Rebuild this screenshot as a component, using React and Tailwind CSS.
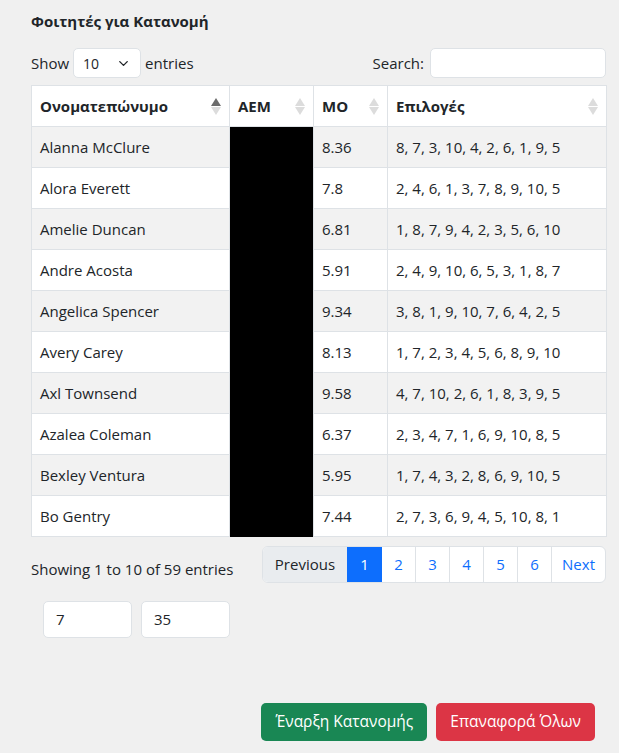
import { ChevronDown } from 'lucide-react'

const rows = [
  ['Alanna McClure', '8.36', '8, 7, 3, 10, 4, 2, 6, 1, 9, 5'],
  ['Alora Everett', '7.8', '2, 4, 6, 1, 3, 7, 8, 9, 10, 5'],
  ['Amelie Duncan', '6.81', '1, 8, 7, 9, 4, 2, 3, 5, 6, 10'],
  ['Andre Acosta', '5.91', '2, 4, 9, 10, 6, 5, 3, 1, 8, 7'],
  ['Angelica Spencer', '9.34', '3, 8, 1, 9, 10, 7, 6, 4, 2, 5'],
  ['Avery Carey', '8.13', '1, 7, 2, 3, 4, 5, 6, 8, 9, 10'],
  ['Axl Townsend', '9.58', '4, 7, 10, 2, 6, 1, 8, 3, 9, 5'],
  ['Azalea Coleman', '6.37', '2, 3, 4, 7, 1, 6, 9, 10, 8, 5'],
  ['Bexley Ventura', '5.95', '1, 7, 4, 3, 2, 8, 6, 9, 10, 5'],
  ['Bo Gentry', '7.44', '2, 7, 3, 6, 9, 4, 5, 10, 8, 1'],
]

// up/down triangles, up one darker when sorted
function SortIcon({ active }) {
  return (
    <span className="flex flex-col items-center gap-[1px]">
      <svg width="10" height="8" viewBox="0 0 10 8">
        <path d="M5 0L10 8H0z" fill={active ? '#6b6b6b' : '#dcdcdc'} />
      </svg>
      <svg width="10" height="8" viewBox="0 0 10 8">
        <path d="M0 0H10L5 8z" fill="#dcdcdc" />
      </svg>
    </span>
  )
}

function Th({ children, active }) {
  return (
    <th className="border border-[#dee2e6] bg-white px-2 h-[41px] text-left font-bold">
      <div className="flex items-center justify-between">
        <span>{children}</span>
        <SortIcon active={active} />
      </div>
    </th>
  )
}

export default function App() {
  return (
    <div
      className="min-h-[753px] w-[619px] bg-[#f0f0f0] text-[#212529] text-[15px]"
      style={{ fontFamily: '"Open Sans", "Noto Sans", sans-serif' }}
    >
      <div className="pl-[31px] pr-[13px] pt-[10px]">
        <h5 className="font-bold text-[15px] h-[22px] leading-[22px]">Φοιτητές για Κατανομή</h5>

        <div className="flex items-center justify-between mt-[16px] h-[30px]">
          <div className="flex items-center gap-[4px]">
            <span>Show</span>
            <div className="flex items-center justify-between w-[68px] h-[30px] bg-white border border-[#dee2e6] rounded-[5px] px-[9px] text-[14px]">
              <span>10</span>
              <ChevronDown size={15} strokeWidth={2.2} />
            </div>
            <span>entries</span>
          </div>
          <div className="flex items-center gap-[6px]">
            <span>Search:</span>
            <div className="w-[176px] h-[30px] bg-white border border-[#dee2e6] rounded-[5px]" />
          </div>
        </div>

        <table className="mt-[7px] w-[575px] border-collapse table-fixed">
          <colgroup>
            <col className="w-[198px]" />
            <col className="w-[84px]" />
            <col className="w-[74px]" />
            <col className="w-[219px]" />
          </colgroup>
          <thead>
            <tr>
              <Th active>Ονοματεπώνυμο</Th>
              <Th>AEM</Th>
              <Th>MO</Th>
              <Th>Επιλογές</Th>
            </tr>
          </thead>
          <tbody>
            {rows.map((r, i) => (
              <tr key={r[0]} className={i % 2 === 0 ? 'bg-[#f2f2f2]' : 'bg-white'}>
                <td className="border border-[#dee2e6] px-2 h-[41px]">{r[0]}</td>
                <td className="border-x border-[#dee2e6] bg-black h-[41px]" />
                <td className="border border-[#dee2e6] px-2 h-[41px]">{r[1]}</td>
                <td className="border border-[#dee2e6] px-2 h-[41px] whitespace-nowrap">{r[2]}</td>
              </tr>
            ))}
          </tbody>
        </table>

        <div className="flex items-center justify-between mt-[9px]">
          <span className="mt-[10px]">Showing 1 to 10 of 59 entries</span>
          <div className="flex h-[37px] border border-[#dee2e6] rounded-[6px] overflow-hidden bg-white">
            <span className="flex items-center px-[12px] bg-[#e9ecef] text-[#212529]">Previous</span>
            <span className="flex items-center justify-center w-[35px] bg-[#0d6efd] text-white">1</span>
            {['2', '3', '4', '5', '6'].map((p) => (
              <span key={p} className="flex items-center justify-center w-[34px] border-r border-[#dee2e6] text-[#0d6efd]">{p}</span>
            ))}
            <span className="flex items-center px-[10px] text-[#0d6efd]">Next</span>
          </div>
        </div>

        <div className="flex gap-[9px] ml-[12px] mt-[18px]">
          <div className="w-[89px] h-[37px] bg-white border border-[#dee2e6] rounded-[5px] flex items-center px-[12px]">7</div>
          <div className="w-[89px] h-[37px] bg-white border border-[#dee2e6] rounded-[5px] flex items-center px-[12px]">35</div>
        </div>

        <div className="flex justify-end gap-[9px] mt-[65px] pr-[11px]">
          <button className="h-[38px] px-[14px] rounded-[5px] bg-[#198754] text-white text-[15.5px]">Έναρξη Κατανομής</button>
          <button className="h-[38px] px-[14px] rounded-[5px] bg-[#dc3545] text-white text-[15.5px]">Επαναφορά Όλων</button>
        </div>
      </div>
    </div>
  )
}
